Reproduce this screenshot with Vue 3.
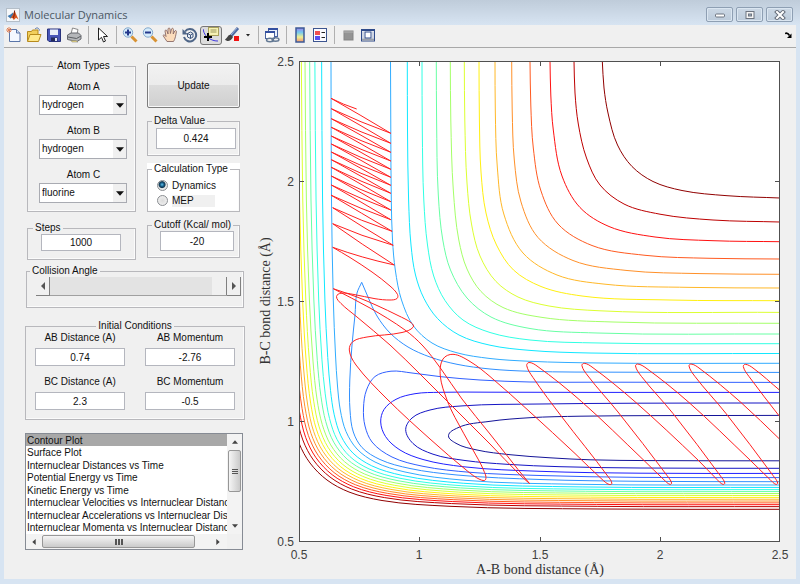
<script setup>
import { ref } from 'vue'

const elements = ['hydrogen', 'fluorine', 'chlorine', 'oxygen']
const atoms = ref([
  { id: 'a', label: 'Atom A', value: 'hydrogen' },
  { id: 'b', label: 'Atom B', value: 'hydrogen' },
  { id: 'c', label: 'Atom C', value: 'fluorine' }
])
const delta = ref('0.424')
const steps = ref('1000')
const cutoff = ref('-20')
const angle = ref(180)
const calculation = ref('dynamics')
const conditions = ref([
  { id: 'abd', label: 'AB Distance (A)', value: '0.74' },
  { id: 'abm', label: 'AB Momentum', value: '-2.76' },
  { id: 'bcd', label: 'BC Distance (A)', value: '2.3' },
  { id: 'bcm', label: 'BC Momentum', value: '-0.5' }
])
const plots = [
  'Contour Plot',
  'Surface Plot',
  'Internuclear Distances vs Time',
  'Potential Energy vs Time',
  'Kinetic Energy vs Time',
  'Internuclear Velocities vs Internuclear Distance',
  'Internuclear Accelerations vs Internuclear Distance',
  'Internuclear Momenta vs Internuclear Distance'
]
const plot = ref(plots[0])

const dist = (a, b) => Math.hypot(b[0] - a[0], b[1] - a[1]) || 1

// Smooth path through a list of points; handles are scaled by segment length.
// bias 0 weighs both neighbouring directions equally, 1 favours the longer segment.
function spline(pts, bias = 0) {
  const n = pts.length
  const tangents = pts.map((p, i) => {
    const a = pts[Math.max(i - 1, 0)]
    const b = pts[Math.min(i + 1, n - 1)]
    const l1 = dist(a, p)
    const l2 = dist(p, b)
    const w1 = l1 ** (bias - 1)
    const w2 = l2 ** (bias - 1)
    const x = (p[0] - a[0]) * w1 + (b[0] - p[0]) * w2
    const y = (p[1] - a[1]) * w1 + (b[1] - p[1]) * w2
    const l = Math.hypot(x, y) || 1
    return [x / l, y / l]
  })
  let d = `M${pts[0][0]} ${pts[0][1]}`
  for (let i = 0; i < n - 1; i++) {
    const k = dist(pts[i], pts[i + 1]) / 3
    const [p, q, s, t] = [pts[i], pts[i + 1], tangents[i], tangents[i + 1]]
    d += `C${[p[0] + s[0] * k, p[1] + s[1] * k, q[0] - t[0] * k, q[1] - t[1] * k, q[0], q[1]]
      .map((v) => v.toFixed(2))
      .join(' ')}`
  }
  return d
}

const palette = ['#900000', '#bd0000', '#ff1010', '#ff5a20', '#ff9028', '#ffb828', '#fff010',
  '#dcff30', '#a4ff68', '#68ffa4', '#30ffe4', '#10e8ff', '#30acff']

const plateau = [
  [[602.3, 61], [604, 88], [608, 113], [617.5, 145], [632, 166.5], [653, 181.5], [682, 190.5], [727, 195.7], [780, 198]],
  [[574, 61], [575, 93], [578.3, 124], [586.5, 158], [600, 185], [624, 204], [660, 214.2], [713, 220], [780, 222]],
  [[550, 61], [550.8, 95], [553.3, 130], [562, 176], [580, 207.5], [609, 226.5], [655, 237], [713, 240.7], [780, 241.7]],
  [[530, 61], [530.8, 105], [533.3, 148], [541, 191], [558, 224], [592, 245.5], [645, 255.3], [710, 258.3], [780, 259]],
  [[511.7, 61], [512.2, 110], [514.3, 160], [521, 202], [538, 237.5], [573, 260.5], [627, 270.5], [700, 273.6], [780, 274.3]],
  [[495, 61], [495.3, 110], [497.3, 167], [503.8, 214], [523, 253], [557, 275], [605, 284.2], [690, 287.4], [780, 288]],
  [[479, 61], [479.4, 120], [481, 172], [486, 213], [496.5, 245], [513.5, 270], [541, 286.5], [582, 296], [670, 300], [780, 300.7]],
  [[464.3, 61], [464.8, 120], [467, 183], [471.5, 224], [480, 256], [496, 281.5], [518, 297], [549, 306], [600, 310.8], [780, 312.4]],
  [[450.3, 61], [450.8, 120], [453.3, 190], [458.8, 240], [467, 269], [481, 291.5], [503, 307.5], [542, 317.4], [613, 322], [780, 323.3]],
  [[436.3, 61], [436.6, 120], [438.3, 195], [442.8, 240], [450.5, 270], [467, 298], [491, 317], [530, 328.5], [597, 333], [780, 334]],
  [[422, 61], [422.3, 130], [423.8, 200], [427.5, 245], [433.7, 276], [445, 300.5], [463, 320], [490, 332.5], [530, 340], [600, 343], [780, 343.7]],
  [[407.3, 61], [407.5, 130], [408.6, 200], [411, 245], [415.5, 275], [424, 298.5], [437.500, 318.5], [459, 335], [490, 345.2], [530, 350.4], [590, 353], [780, 353.5]],
  [[390.5, 61], [390.8, 130], [391.3, 200], [392.5, 240], [395.3, 270], [401.5, 300], [413.5, 326], [432, 343], [457, 352.8], [490, 358.5], [530, 361.3], [600, 363], [780, 363.3]]
]

const well = [
  { color: '#3090ff', d: spline([[780, 372.4], [620, 372.2], [530, 371.3], [490, 369], [457, 364.3], [430, 357], [408, 347], [390, 333], [377, 316], [368, 297], [361.7, 282.3]]) +
      spline([[361.7, 282.3], [357, 293], [355, 315], [352, 345], [349.8, 380], [350, 410], [353.3, 432], [362, 447.5], [380, 459.5], [410, 468.5], [457, 475], [540, 479.5], [640, 481.3], [780, 481.7]]) },
  { color: '#3060ff', d: spline([[780, 382.4], [600, 382.2], [530, 382], [480, 380], [440, 376.6], [412, 373], [391, 371.2], [375, 376.5], [366.5, 390], [363.5, 408], [365, 426], [372, 442], [392, 457], [423, 466.3], [470, 472.3], [540, 475.5], [640, 477.4], [780, 477.6]]) },
  { color: '#2020ff', d: spline([[780, 392.4], [600, 392.4], [490, 392.2], [440, 392.3], [415, 393.7], [396, 399.3], [384, 409.5], [380.7, 422], [385.5, 436.5], [400, 450], [423, 459.5], [464, 466.8], [540, 471.3], [640, 473.2], [780, 473.4]]) },
  { color: '#1414c4', d: spline([[780, 403], [640, 403.2], [540, 404], [462, 405.9], [430, 410], [412, 418], [405.7, 429.5], [413, 443.5], [433, 454.2], [465, 460.5], [507, 464.3], [560, 466.7], [640, 468], [780, 468.3]]) },
  { color: '#141498', d: spline([[780, 415.4], [660, 415.6], [580, 416.2], [530, 417.7], [490, 421.3], [458, 427.7], [448.5, 435.7], [456, 443.3], [477, 450], [510, 454.7], [550, 457.8], [590, 459.8], [650, 460.6], [780, 460.8]]) }
]

// The repulsive wall: levels blend from an inner to an outer curve.
const inner = [[331, 61], [331.5, 200], [333.3, 300], [335.500, 355], [337.5, 386], [340.3, 410], [346, 431.5], [357, 449], [375, 462], [405, 472], [465, 480.3], [580, 484.3], [780, 485]]
const outer = [[279, 61], [280, 200], [283, 300], [287, 370], [292, 415], [299, 443], [310, 463], [327, 480], [349, 492], [382, 500.5], [450, 506.3], [600, 509], [780, 509.3]]
const wx = [0, 0.18, 0.31, 0.41, 0.5, 0.57, 0.63, 0.69, 0.745, 0.8, 0.856, 0.92, 1]
const wy = [0, 0.1, 0.19, 0.27, 0.35, 0.43, 0.51, 0.585, 0.66, 0.735, 0.81, 0.89, 1]
const wall = wx.map((tx, k) =>
  inner.map((p, i) => {
    const f = i / (inner.length - 1)
    const t = tx * (1 - f) + wy[k] * f
    return [p[0] + (outer[i][0] - p[0]) * t, p[1] + (outer[i][1] - p[1]) * t]
  })
)

const contours = [
  ...plateau.map((p, i) => ({ color: palette[i], d: spline(p) })),
  ...well,
  ...wall.map((p, i) => ({ color: palette[12 - i], d: spline(p) }))
]

// Trajectory: vibration in the entrance channel, then the scattered exit path.
const leftTurns = [98.3, 108.7, 118.7, 127.3, 136, 144, 152, 159.7, 167.3, 176, 185, 195.3, 207.7, 223.7]
const rightTurns = [133.3, 143.3, 152.3, 161, 169.3, 177.3, 185.3, 193.3, 201.7, 210, 219.7, 231.3, 245.3, 265]
let vibration = 'M356.7 109Q343 104.500 331 98.3'
rightTurns.forEach((y, i) => {
  const l = leftTurns[i]
  const rx = i < 11 ? 390.8 : 391 + (i - 10) * 1.1
  const nl = i < 13 ? leftTurns[i + 1] : 247.3
  vibration += `Q361 ${(l + y) / 2 - 0.5} ${rx} ${y}`
  vibration += `Q361 ${(y + nl) / 2 + 1.5} ${i < 11 ? 331.3 : 332.7} ${nl}`
})
const scattering = [
  [[332.7, 247.3], [350, 257.5], [372, 272], [390, 286], [397.5, 294.5], [397, 298.5], [390, 300], [375, 298.7], [354, 294.5], [341, 293.2], [336.5, 296.5], [341, 303.5], [357, 317], [390, 345], [420, 374], [447, 401], [490, 444], [520, 475], [529.5, 483.5]],
  [[529.5, 483.5], [518, 469.5], [490, 434], [462, 399], [440, 367.5], [423, 346], [405, 330], [370, 308], [333.3, 288.7]],
  [[333.3, 288.7], [357, 297], [377, 305.5], [398, 315.5], [411.5, 323], [413.3, 327], [402, 332.5], [367, 337], [353, 341.5], [349.3, 350], [356, 365], [387, 399], [430, 439], [468, 471.5], [480, 479.5], [485.5, 479.7], [483.5, 470], [473, 450], [455, 417.5], [447, 400], [440.3, 376], [443, 359], [453, 354.3], [470, 361.5], [490, 376.5], [530, 412], [575, 453.5], [602, 479.3], [609, 484.4], [611.8, 483.5], [608, 476.5], [561.7, 416.7], [533, 377.5], [526.7, 365.5], [529, 362.5], [537, 366], [581.7, 401.7], [643, 459.5], [664, 479.8], [670, 484.4], [671.6, 483], [667, 475.5], [618, 412], [588, 376], [581.9, 365.5], [584.2, 363.3], [592, 367], [635, 401.7], [698, 460], [717, 479.5], [723, 484.4], [724.8, 483], [720.5, 476], [673, 413.5], [641.5, 376.500], [635.5, 366], [637.7, 364], [646, 368], [689, 402.500], [750, 460], [770, 479.5], [776, 484.4], [777.7, 483], [773, 475.5], [726, 413.5], [695, 376.500], [689, 366], [691, 364], [699, 368], [741, 402.5], [780, 439.5]],
  [[780, 417], [749, 376.500], [743.3, 366.5], [745.3, 364.3], [753, 368], [780, 390.5]]
]
const trajectory = vibration + scattering.map((p) => spline(p, 0.7)).join('')

const ticks = [
  { label: '0.5', x: 299, y: 541 },
  { label: '1', x: 419, y: 421 },
  { label: '1.5', x: 540, y: 301 },
  { label: '2', x: 660, y: 181 },
  { label: '2.5', x: 780, y: 61 }
]
</script>

<template>
  <div class="window">
    <header class="titlebar">
      <svg class="logo" viewBox="0 0 14 14" aria-hidden="true">
        <rect x=".5" y=".5" width="13" height="13" fill="#f6f8fa" stroke="#b4bec8" />
        <path d="M1.500 8l3-1.600L7 4.500l1 3-3.500 3z" fill="#3d78b0" />
        <path d="M4.500 10.500L7 6.500 8.600 2.500 10 6l2.500 5.500-2.500-1.700-2.200 2.200-1.600-2.200z" fill="#d9541e" />
        <path d="M8.600 2.500L8 8l-1 2" stroke="#7a1f10" fill="none" />
      </svg>
      <h1>Molecular Dynamics</h1>
      <div class="controls">
        <button type="button" aria-label="Minimize">
          <svg viewBox="0 0 12 10"><rect x="1.500" y="4" width="9" height="3" rx="1" fill="#fff" stroke="#6d7480" /></svg>
        </button>
        <button type="button" aria-label="Maximize">
          <svg viewBox="0 0 12 10"><rect x="2" y="1.500" width="8" height="7" fill="#f4f4f4" stroke="#6d7480" /><rect x="4.500" y="4" width="3" height="2" fill="#9fb0c2" stroke="#6d7480" /></svg>
        </button>
        <button type="button" aria-label="Close">
          <svg viewBox="0 0 12 10"><path d="M3 2l6 6M9 2l-6 6" stroke="#666d7a" stroke-width="4" stroke-linecap="square" /><path d="M3 2l6 6M9 2l-6 6" stroke="#fff" stroke-width="2" stroke-linecap="square" /></svg>
        </button>
      </div>
    </header>

    <nav class="toolbar" aria-label="Figure tools">
      <button type="button" aria-label="New">
        <svg viewBox="0 0 16 16"><path d="M3.500 2.500h7l3.500 3.500v8.500H3.500z" fill="#f4f8ff" stroke="#5a75a8" /><path d="M10.500 2.500V6H14" fill="#cddcf2" stroke="#5a75a8" /><path d="M3 0v6M0 3h6M1 1l4 4M5 1L1 5" stroke="#e0825a" /></svg>
      </button>
      <button type="button" aria-label="Open">
        <svg viewBox="0 0 16 16"><path d="M1.500 14V4.500h4l1-1.500H12v4" fill="#f2cf5c" stroke="#b78a1c" /><path d="M1.500 14.500L4 7.500h11l-2.500 7z" fill="#ffe98c" stroke="#b78a1c" /><path d="M9 2c2-2 4-1 4.500 1.500" fill="none" stroke="#5674a8" /></svg>
      </button>
      <button type="button" aria-label="Save">
        <svg viewBox="0 0 16 16"><path d="M1.500 2h13v12.500H3L1.500 13z" fill="#4856b8" stroke="#28337c" /><path d="M4 2.500h8V8H4z" fill="#e8eef8" /><path d="M5 10.500h6.500V14H5z" fill="#222a5a" /><path d="M9 11h2v3H9z" fill="#e6e9f2" /></svg>
      </button>
      <button type="button" aria-label="Print">
        <svg viewBox="0 0 16 16"><path d="M5 7l1.500-6L12 2.500 11 7" fill="#fff" stroke="#888" /><path d="M1.500 8L5 6h7.500L15 8.500V12l-4 2.500-9.500-2z" fill="#b5b7ba" stroke="#66696e" /><path d="M2 10l8.500 1.500L15 9" fill="none" stroke="#5b5e62" /><path d="M5 13.500h5l2 1.500H6z" fill="#f4df80" stroke="#777" stroke-width=".5" /></svg>
      </button>
      <i class="sep"></i>
      <button type="button" aria-label="Edit plot">
        <svg viewBox="0 0 16 16"><path d="M4.500 1v12l3-2.700 2 4.700 2-1-2-4.500h4z" fill="#fff" stroke="#222" /></svg>
      </button>
      <i class="sep"></i>
      <button type="button" aria-label="Zoom in">
        <svg viewBox="0 0 16 16"><path d="M9.500 9.500l5 5" stroke="#d89232" stroke-width="3" /><circle cx="6" cy="5.500" r="4.700" fill="#d6ecfb" stroke="#82a8cc" /><path d="M3 5.500h6M6 2.500v6" stroke="#24388c" stroke-width="2" /></svg>
      </button>
      <button type="button" aria-label="Zoom out">
        <svg viewBox="0 0 16 16"><path d="M9.500 9.500l5 5" stroke="#d89232" stroke-width="3" /><circle cx="6" cy="5.500" r="4.700" fill="#d6ecfb" stroke="#82a8cc" /><path d="M3 5.500h6" stroke="#24388c" stroke-width="2" /></svg>
      </button>
      <button type="button" aria-label="Pan">
        <svg viewBox="0 0 16 16"><path d="M5 14.500c-1-2-3-4-4-6 .5-1 2-.5 3 1L3 4c.3-1.500 1.500-1.200 2 0l1 3V2c.4-1.400 1.800-1.300 2 0l.4 4.500L9.500 2c.6-1.200 1.900-.8 1.900.5L11.200 7l1.600-3c.8-.9 1.900-.3 1.600.9-.6 2.800-1 7-2.900 9.600z" fill="#fbdcbc" stroke="#8a6a66" stroke-width=".9" /></svg>
      </button>
      <button type="button" aria-label="Rotate">
        <svg viewBox="0 0 16 16"><path d="M3 4.500A6.200 6.200 0 1 1 2 10" fill="none" stroke="#4f6688" stroke-width="2" /><path d="M.5 2v5.500H6z" fill="#4f6688" /><path d="M5.500 6.500l3-1.500L11 6.500v3.500L8.500 11.500 5.500 10zM5.500 6.500L8.500 8 11 6.500M8.500 8v3.500" fill="#e6eef8" stroke="#3f567c" /></svg>
      </button>
      <button type="button" class="pressed" aria-label="Data cursor" aria-pressed="true">
        <svg viewBox="0 0 16 16"><rect x="5.500" y=".5" width="10" height="8" fill="#f6f2b4" stroke="#a8a05c" /><path d="M7.500 3h6M7.500 5h6" stroke="#9a965c" /><path d="M0 2c1 5 3 8 7 10 3 1.500 5 2 8 2" fill="none" stroke="#4038e0" /><path d="M5 6v8M1 10h8" stroke="#000" stroke-width="2" /></svg>
      </button>
      <button type="button" aria-label="Brush">
        <svg viewBox="0 0 16 16"><path d="M14 1L7 9" stroke="#4e6aa2" stroke-width="3" /><path d="M13 1L7 8" stroke="#9bb4dc" /><path d="M7 8c-3-1-3 3-6 4.500 2 2.500 6 2 8-2.500z" fill="#444" /><rect x="10" y="9" width="5" height="5" fill="#f01010" /></svg>
      </button>
      <button type="button" class="caret" aria-label="Brush options">
        <svg viewBox="0 0 6 6"><path d="M1 2h4L3 4.500z" fill="#222" /></svg>
      </button>
      <i class="sep"></i>
      <button type="button" aria-label="Link plot">
        <svg viewBox="0 0 16 16"><rect x="4.500" y="1.500" width="9" height="8" fill="#e8f0fb" stroke="#4660a0" /><path d="M4 2h10" stroke="#3450a0" stroke-width="2" /><rect x="1.500" y="4.500" width="9" height="7" fill="#fff" stroke="#4660a0" /><path d="M1 5h10" stroke="#3450a0" stroke-width="2" /><ellipse cx="6" cy="13" rx="3.500" ry="1.800" fill="none" stroke="#637994" stroke-width="1.400" /><ellipse cx="11.500" cy="12.500" rx="3.500" ry="1.800" fill="none" stroke="#637994" stroke-width="1.400" /></svg>
      </button>
      <i class="sep"></i>
      <button type="button" aria-label="Insert colorbar">
        <svg viewBox="0 0 16 16">
          <defs><linearGradient id="bar" x1="0" y1="0" x2="0" y2="1"><stop offset="0" stop-color="#a080e8" /><stop offset=".3" stop-color="#70c8f0" /><stop offset=".65" stop-color="#f0f090" /><stop offset="1" stop-color="#f09070" /></linearGradient></defs>
          <rect x="4" y="1" width="8" height="14" fill="url(#bar)" stroke="#3c5a96" stroke-width="1.500" />
        </svg>
      </button>
      <button type="button" aria-label="Insert legend">
        <svg viewBox="0 0 16 16"><rect x="1.500" y="1.500" width="13" height="13" fill="#fbfbff" stroke="#3c5590" /><rect x="3" y="4" width="5" height="4" fill="#f05050" /><rect x="3" y="9" width="5" height="4" fill="#5850f0" /><path d="M9.500 5.500H13M9.500 10.500H13" stroke="#222" /></svg>
      </button>
      <i class="sep"></i>
      <button type="button" aria-label="Hide plot tools">
        <svg viewBox="0 0 16 16"><rect x="4" y="4" width="9" height="9" fill="#949494" stroke="#858585" /><path d="M4 5h9" stroke="#b5b5b5" /></svg>
      </button>
      <button type="button" aria-label="Show plot tools">
        <svg viewBox="0 0 16 16"><rect x="1.500" y="2.500" width="13" height="11.500" fill="#f7f7f7" stroke="#2f4b8a" /><path d="M1 3h14" stroke="#2f4b8a" stroke-width="2" /><path d="M2 12.500h12" stroke="#9aa0aa" stroke-width="2" /><rect x="5" y="5" width="6" height="6" fill="#fff" stroke="#2f4b8a" /><path d="M3 4.500v7M13 4.500v7" stroke="#a9b6d0" /></svg>
      </button>
      <button type="button" class="dock" aria-label="Dock figure">
        <svg viewBox="0 0 7 7"><path d="M0 1.500c2-1 3-.5 4.500 2" fill="none" stroke="#000" stroke-width="1.500" /><path d="M6.500 1.500V6H2z" fill="#000" /></svg>
      </button>
    </nav>

    <main class="body">
      <form class="side" @submit.prevent>
        <div class="pair">
          <div class="col">
            <fieldset class="atoms">
              <legend>Atom Types</legend>
              <div v-for="atom in atoms" :key="atom.id" class="field">
                <label :for="'atom-' + atom.id">{{ atom.label }}</label>
                <div class="drop">
                  <select :id="'atom-' + atom.id" v-model="atom.value">
                    <option v-for="e in elements" :key="e">{{ e }}</option>
                  </select>
                  <svg viewBox="0 0 9 5" aria-hidden="true"><path d="M0 0h9L4.500 5z" fill="#111" /></svg>
                </div>
              </div>
            </fieldset>
            <fieldset class="steps">
              <legend id="steps-name">Steps</legend>
              <input v-model="steps" type="text" aria-labelledby="steps-name" />
            </fieldset>
          </div>
          <div class="col right">
            <button type="submit" class="update">Update</button>
            <fieldset class="delta">
              <legend id="delta-name">Delta Value</legend>
              <input v-model="delta" type="text" aria-labelledby="delta-name" />
            </fieldset>
            <div class="white">
              <fieldset class="calc">
                <legend>Calculation Type</legend>
                <label><input v-model="calculation" type="radio" name="calc" value="dynamics" />Dynamics</label>
                <label class="mep"><input v-model="calculation" type="radio" name="calc" value="mep" /><span>MEP</span></label>
              </fieldset>
            </div>
            <fieldset class="cutoff">
              <legend id="cutoff-name">Cutoff (Kcal/ mol)</legend>
              <input v-model="cutoff" type="text" aria-labelledby="cutoff-name" />
            </fieldset>
          </div>
        </div>

        <fieldset class="collision">
          <legend id="angle-name">Collision Angle</legend>
          <div class="slider">
            <button type="button" aria-label="Decrease angle"><svg viewBox="0 0 4 8"><path d="M4 0v8L0 4z" fill="#555" /></svg></button>
            <input v-model="angle" type="range" min="0" max="180" aria-labelledby="angle-name" />
            <button type="button" aria-label="Increase angle"><svg viewBox="0 0 4 8"><path d="M0 0v8l4-4z" fill="#555" /></svg></button>
          </div>
        </fieldset>

        <fieldset class="initial">
          <legend>Initial Conditions</legend>
          <div class="grid">
            <div v-for="c in conditions" :key="c.id" class="cell">
              <label :for="c.id">{{ c.label }}</label>
              <input :id="c.id" v-model="c.value" type="text" />
            </div>
          </div>
        </fieldset>

        <div class="list">
          <select v-model="plot" size="8" aria-label="Plot type">
            <option v-for="p in plots" :key="p">{{ p }}</option>
          </select>
          <div class="bar vertical" aria-hidden="true">
            <svg viewBox="0 0 7 4"><path d="M0 4h7L3.500 0z" fill="#444" /></svg>
            <span class="thumb"><i></i><i></i><i></i></span>
            <svg viewBox="0 0 7 4"><path d="M0 0h7L3.500 4z" fill="#444" /></svg>
          </div>
          <div class="bar horizontal" aria-hidden="true">
            <svg viewBox="0 0 4 7"><path d="M4 0v7L0 3.500z" fill="#444" /></svg>
            <span class="thumb"><i></i><i></i><i></i></span>
            <svg viewBox="0 0 4 7"><path d="M0 0v7l4-3.500z" fill="#444" /></svg>
          </div>
        </div>
      </form>

      <svg class="plot" viewBox="252 48 544 531" role="img" aria-label="Contour plot with trajectory">
        <defs>
          <clipPath id="area"><rect x="299" y="61" width="481" height="480" /></clipPath>
        </defs>
        <rect x="299" y="61" width="481" height="480" fill="#fff" />
        <g clip-path="url(#area)" fill="none" stroke-width="1">
          <path v-for="(c, i) in contours" :key="i" :d="c.d" :stroke="c.color" />
          <path :d="trajectory" stroke="#ff2020" />
        </g>
        <rect x="299.500" y="61.500" width="480" height="480" fill="none" stroke="#505050" />
        <g stroke="#505050">
          <template v-for="t in ticks.slice(1, 4)" :key="t.label">
            <path :d="`M${t.x + 0.5} 541v-4M${t.x + 0.5} 62v4M299 ${t.y + 0.5}h5M780 ${t.y + 0.5}h-5`" />
          </template>
        </g>
        <g class="ticks">
          <template v-for="t in ticks" :key="t.label">
            <text :x="t.x" y="559" text-anchor="middle">{{ t.label }}</text>
            <text x="294" :y="t.y + 5" text-anchor="end">{{ t.label }}</text>
          </template>
        </g>
        <g class="axis" text-anchor="middle">
          <text x="540" y="574">A-B bond distance (Å)</text>
          <text transform="translate(270 301) rotate(-90)">B-C bond distance (Å)</text>
        </g>
      </svg>
    </main>
  </div>
</template>

<style>
body {
  margin: 0;
  background: #d7e4f2;
}
</style>

<style scoped>
.window {
  box-sizing: border-box;
  min-height: 100vh;
  display: flex;
  flex-direction: column;
  padding: 0 4px 5px;
  background: linear-gradient(#bfccda, #d7e4f2 25px);
  font-family: "Liberation Sans", Arial, sans-serif;
  font-size: 10px;
  line-height: 12px;
  color: #111;
}
button, input, select {
  font: inherit;
  color: inherit;
  margin: 0;
  padding: 0;
  box-sizing: border-box;
  border-radius: 0;
}
svg { display: block; }
.titlebar {
  display: flex;
  align-items: center;
  height: 25px;
  padding: 4px 3px 0 2px;
  box-sizing: border-box;
}
.logo { width: 14px; height: 14px; }
h1 {
  flex: 1;
  margin: 0 0 0 4px;
  font: 11px/16px "Open Sans", "Noto Sans", sans-serif;
  color: #4c5763;
}
.controls { display: flex; gap: 3px; }
.controls button {
  width: 27px;
  height: 15px;
  display: grid;
  place-items: center;
  border: 1px solid #8e9fb3;
  border-radius: 2px;
  background: linear-gradient(#ccd8e5, #bccbdb);
  box-shadow: inset 0 0 0 1px #dbe6f1;
}
.controls svg { width: 12px; height: 10px; }
.toolbar {
  display: flex;
  align-items: center;
  height: 23px;
  box-sizing: border-box;
  padding-bottom: 2px;
  background: #f0f0f0;
  border-bottom: 1px solid #a8a8a8;
}
.toolbar button {
  width: 20px;
  height: 19px;
  display: grid;
  place-items: center;
  background: none;
  border: 0;
}
.toolbar button svg { width: 16px; height: 16px; }
.toolbar .pressed {
  width: 22px;
  border: 1px solid #777;
  border-radius: 3px;
  background: #dcdcdc;
}
.toolbar .caret { width: 12px; }
.toolbar .caret svg { width: 6px; height: 6px; }
.toolbar .dock { width: 16px; margin-left: auto; }
.toolbar .dock svg { width: 7px; height: 7px; }
.sep {
  width: 1px;
  height: 18px;
  margin: 0 3px 0 4px;
  background: #b0b0b0;
}
.body {
  flex: 1;
  display: flex;
  align-items: flex-start;
  background: #f0f0f0;
}
.side {
  width: 220px;
  flex: none;
  padding: 12px 7px 0 21px;
}
.plot { flex: 1; min-width: 0; }
fieldset {
  margin: 0;
  min-width: 0;
  box-sizing: border-box;
  border: 1px solid #b8b8bc;
  padding: 0 5px;
  box-shadow: inset -1px -1px #fbfbfb;
}
legend { padding: 0 2px; }
input[type="text"] {
  display: block;
  text-align: center;
  background: #fff;
  border: 1px solid #b4b6be;
}
.pair {
  display: grid;
  grid-template-columns: 109px 93px;
  gap: 11px;
  padding-left: 2px;
}
.col { display: flex; flex-direction: column; gap: 10px; }
.col.right { gap: 7px; padding-top: 3px; }
.atoms { padding: 9px 7px 8px 11px; height: 152px; }
.atoms legend { margin: 0 auto; padding: 0 4px; }
.field { margin-bottom: 10px; text-align: center; }
.field label { display: block; margin-bottom: 2px; }
.drop { position: relative; }
.drop select {
  appearance: none;
  display: block;
  width: 88px;
  height: 20px;
  padding-left: 2px;
  background: linear-gradient(90deg, #fff 73px, #f0f0f0 73px);
  border: 1px solid #a9abb2;
}
.drop svg {
  position: absolute;
  right: 4px;
  top: 8px;
  width: 8px;
  height: 5px;
  pointer-events: none;
}
.steps { padding: 0 13px 8px; }
.steps legend { margin-left: -8px; }
.steps input { width: 80px; height: 17px; }
.update {
  height: 45px;
  border: 1px solid #7d7d7d;
  border-radius: 2px;
  background: linear-gradient(#f2f2f2, #ebebeb 50%, #dcdcdc 50%, #cfcfcf);
  box-shadow: inset 0 0 0 1px #f8f8f8;
}
.delta { padding: 1px 8px 6px; }
.delta legend, .cutoff legend { margin-left: -4px; }
.delta input { width: 80px; height: 21px; }
.white { background: #fff; }
.calc { padding: 3px 7px 3px 9px; }
.calc legend { margin-left: -5px; }
.calc label {
  display: flex;
  align-items: center;
  gap: 4px;
  height: 15px;
}
.calc .mep span { width: 43px; background: #f0f0f0; }
.calc input {
  appearance: none;
  width: 11px;
  height: 11px;
  border: 1px solid #8a8d91;
  border-radius: 50%;
  background: radial-gradient(#dcdcdc, #f4f4f4);
}
.calc input:checked {
  background: radial-gradient(circle at 45% 40%, #5fc3ec 0, #14557f 2px, #12384f 3px, #e8e8e8 4px);
}
.cutoff { padding: 0 13px 6px; }
.cutoff legend { margin-left: -9px; white-space: nowrap; }
.cutoff input { width: 74px; height: 20px; margin-left: -1px; }
.collision { margin: 5px 1px 0; padding: 0 2px 11px 9px; }
.collision legend { margin-left: -6px; }
.slider { display: flex; height: 19px; }
.slider button {
  width: 14px;
  display: grid;
  place-items: center;
  background: #f0f0f0;
  border: 0;
  border-right: 1px solid #808080;
  border-bottom: 1px solid #808080;
}
.slider svg { width: 4px; height: 8px; }
.slider input {
  appearance: none;
  flex: 1;
  min-width: 0;
  height: 19px;
  background: #e3e3e3;
  border-bottom: 1px solid #a0a0a0;
}
.slider input::-webkit-slider-thumb {
  appearance: none;
  width: 15px;
  height: 18px;
  background: #f0f0f0;
  border-right: 1px solid #808080;
}
.initial { margin-top: 12px; padding: 0 9px 9px; }
.initial legend { margin: 0 auto; }
.grid {
  display: grid;
  grid-template-columns: 1fr 1fr;
  gap: 10px 20px;
}
.cell label {
  display: block;
  margin-bottom: 4px;
  text-align: center;
}
.cell input { width: 100%; height: 18px; }
.list {
  display: grid;
  grid-template-columns: 1fr 15px;
  grid-template-rows: 100px 15px;
  width: 218px;
  box-sizing: border-box;
  margin-top: 13px;
  border: 1px solid #868b94;
  background: #f0f0f0;
}
.list select {
  width: 100%;
  height: 100px;
  border: 0;
  outline: 0;
  overflow: hidden;
  background: #fff;
}
.list option {
  box-sizing: border-box;
  min-height: 0;
  height: 12px;
  padding: 1px 1px 0;
  line-height: 12px;
  color: #111;
}
.list option:nth-child(even) { height: 13px; }
.list option:checked {
  background: #a8a8a8 linear-gradient(#a8a8a8, #a8a8a8);
  color: #111;
}
.bar {
  display: flex;
  align-items: center;
  background: #f3f3f3;
}
.vertical { flex-direction: column; padding: 6px 0; }
.vertical svg { width: 6px; height: 4px; }
.horizontal { padding: 0 7px 0 6px; }
.horizontal svg { width: 4px; height: 6px; }
.thumb {
  display: flex;
  align-items: center;
  justify-content: center;
  gap: 1px;
  box-sizing: border-box;
  border: 1px solid #979797;
  border-radius: 2px;
}
.vertical .thumb {
  flex-direction: column;
  width: 13px;
  height: 42px;
  margin: 6px 0 auto;
  background: linear-gradient(90deg, #f5f5f5, #cacaca);
}
.vertical i { width: 6px; height: 1px; background: #555; }
.vertical .thumb, .horizontal .thumb { flex-shrink: 0; }
.horizontal .thumb {
  width: 153px;
  height: 13px;
  margin: 0 auto 0 6px;
  background: linear-gradient(#f5f5f5, #cacaca);
}
.horizontal i { width: 2px; height: 6px; background: #555; }
.ticks { font-size: 12px; fill: #404040; }
.axis {
  font-family: "Liberation Serif", "Times New Roman", serif;
  font-size: 14px;
  fill: #333;
}
</style>
